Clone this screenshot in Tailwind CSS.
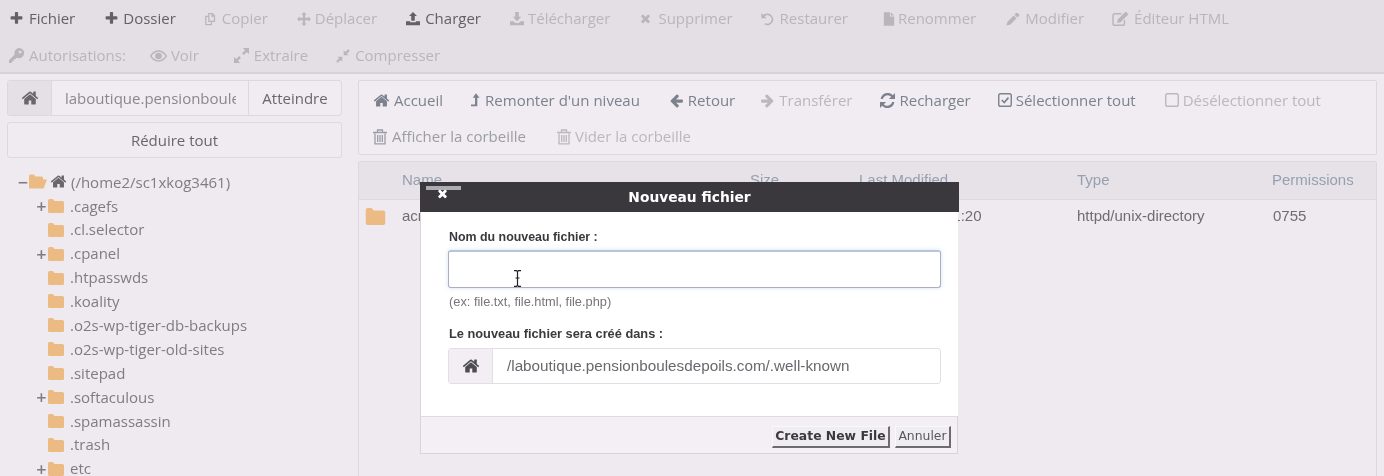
<!DOCTYPE html>
<html><head><meta charset="utf-8"><script src="https://cdn.jsdelivr.net/npm/@tailwindcss/browser@4"></script></head>
<body class="m-0 p-0">
<svg class="hidden" width="0" height="0">
<symbol id="home" viewBox="0 0 1792 1792"><path fill="currentColor" d="M1472 992v480q0 26-19 45t-45 19h-384v-384h-256v384h-384q-26 0-45-19t-19-45v-480q0-1 .5-3t.5-3l575-474 575 474q1 2 1 6zm223-69l-62 74q-8 9-21 11h-3q-13 0-21-7l-692-577-692 577q-12 8-24 7-13-2-21-11l-62-74q-8-10-7-23.500t11-21.500l719-599q32-26 76-26t76 26l244 204v-195q0-14 9-23t23-9h192q14 0 23 9t9 23v408l219 182q10 8 11 21.500t-7 23.500z"/></symbol>
<symbol id="plus" viewBox="0 0 1792 1792"><path fill="currentColor" d="M1600 736v192q0 40-28 68t-68 28h-416v416q0 40-28 68t-68 28h-192q-40 0-68-28t-28-68v-416h-416q-40 0-68-28t-28-68v-192q0-40 28-68t68-28h416v-416q0-40 28-68t68-28h192q40 0 68 28t28 68v416h416q40 0 68 28t28 68z"/></symbol>
<symbol id="times" viewBox="0 0 1792 1792"><path fill="currentColor" d="M1490 1322q0 40-28 68l-136 136q-28 28-68 28t-68-28l-294-294-294 294q-28 28-68 28t-68-28l-136-136q-28-28-28-68t28-68l294-294-294-294q-28-28-28-68t28-68l136-136q28-28 68-28t68 28l294 294 294-294q28-28 68-28t68 28l136 136q28 28 28 68t-28 68l-294 294 294 294q28 28 28 68z"/></symbol>
<symbol id="left" viewBox="0 0 1792 1792"><path fill="currentColor" d="M1664 896v128q0 53-32.500 90.500t-84.500 37.500h-704l293 294q38 36 38 90t-38 90l-75 76q-37 37-90 37-52 0-91-37l-651-652q-37-37-37-90 0-52 37-91l651-650q38-38 91-38 52 0 90 38l75 74q38 38 38 91t-38 91l-293 293h704q52 0 84.500 37.500t32.500 90.500z"/></symbol>
<symbol id="right" viewBox="0 0 1792 1792"><path fill="currentColor" d="M1600 960q0 54-37 91l-651 651q-39 37-91 37-51 0-90-37l-75-75q-38-38-38-91t38-91l293-293h-704q-52 0-84.500-37.500t-32.500-90.500v-128q0-53 32.500-90.500t84.500-37.500h704l-293-294q-38-36-38-90t38-90l75-75q38-38 90-38 53 0 91 38l651 651q37 35 37 90z"/></symbol>
<symbol id="copy" viewBox="0 0 16 16"><path fill="none" stroke="currentColor" stroke-width="1.400" d="M5.500 1.700h4l2.500 2.500v6.600H5.500zM9 1.700v3h3M5.500 5H2v9.300h6.500v-3.500"/></symbol>
<symbol id="move" viewBox="0 0 16 16"><path fill="currentColor" d="M8 0l3 3H9.300v3.700H13V5l3 3-3 3V9.300H9.300V13H11l-3 3-3-3h1.700V9.300H3V11L0 8l3-3v1.700h3.700V3H5z"/></symbol>
<symbol id="upload" viewBox="0 0 16 16"><path fill="currentColor" d="M8 0l4.500 4.700H10V10H6V4.700H3.500zM0 10.500h4.700v1.200h6.600v-1.200H16V15H0z"/></symbol>
<symbol id="download" viewBox="0 0 16 16"><path fill="currentColor" d="M6 0h4v5.500h2.800L8 10.500 3.200 5.500H6zM0 10.500h3.800L6 12.700h4l2.200-2.200H16V15H0z"/></symbol>
<symbol id="undo" viewBox="0 0 16 16"><path fill="none" stroke="currentColor" stroke-width="2" d="M3.500 4.500A5.800 5.800 0 1 1 5 13.500"/><path fill="currentColor" d="M1 1l6 6H1z"/></symbol>
<symbol id="file" viewBox="0 0 14 16"><path fill="currentColor" d="M1 0h7v5h5v11H1zM9 0l4 4H9z"/></symbol>
<symbol id="pencil" viewBox="0 0 16 16"><path fill="currentColor" d="M11.500 1.200a1.500 1.500 0 0 1 2 0l1.300 1.300a1.500 1.500 0 0 1 0 2L13 6.300 9.700 3zM8.800 3.900l3.300 3.300L5 14.300.5 15.500 1.700 11z"/></symbol>
<symbol id="edit" viewBox="0 0 18 16"><path fill="none" stroke="currentColor" stroke-width="1.500" d="M13.200 9.500v3.700a2 2 0 0 1-2 2H3a2 2 0 0 1-2-2V5a2 2 0 0 1 2-2h7"/><path fill="currentColor" d="M14.500.5l3 3L9 12l-3.500.7.600-3.700z"/></symbol>
<symbol id="key" viewBox="0 0 16 16"><path fill="currentColor" fill-rule="evenodd" d="M10.500 0a5.500 5.500 0 1 1-2.200 10.500L6.700 12.100H5v2H3V16H0v-3l6-6A5.500 5.500 0 0 1 10.500 0zm1.300 2.800a1.500 1.500 0 1 0 0 3 1.500 1.500 0 0 0 0-3z"/></symbol>
<symbol id="eye" viewBox="0 0 18 12"><path fill="currentColor" fill-rule="evenodd" d="M9 0c4 0 7.300 2.500 9 6-1.700 3.500-5 6-9 6S1.700 9.500 0 6c1.700-3.500 5-6 9-6zm0 1.500C6 1.500 3.300 3.300 1.700 6 3.300 8.700 6 10.500 9 10.500s5.700-1.800 7.300-4.500C14.700 3.300 12 1.500 9 1.500zM9 2.500a3.500 3.500 0 1 1 0 7 3.500 3.500 0 0 1 0-7z"/></symbol>
<symbol id="expand" viewBox="0 0 16 16"><path fill="currentColor" d="M9.500 0H16v6.500l-2.300-2.300-3.200 3.200-1.900-1.900 3.200-3.200zM6.500 16H0V9.500l2.300 2.300 3.200-3.200 1.900 1.900-3.200 3.200z"/></symbol>
<symbol id="compress" viewBox="0 0 16 16"><path fill="currentColor" d="M8.800 7.200V1.500l1.900 1.900L14 .2l1.800 1.800-3.300 3.300 2 1.900zM7.200 8.800v5.700l-1.900-1.900L2 15.800.2 14l3.300-3.300-2-1.900z"/></symbol>
<symbol id="levelup" viewBox="0 0 10 16"><path fill="currentColor" d="M5.500 0l4 5H7v9.500H0v-2h4.500V5H2z"/></symbol>
<symbol id="refresh" viewBox="0 0 16 16"><path fill="currentColor" d="M13.700 2.300L16 0v6.500H9.500L12 4A5.300 5.300 0 0 0 3 6.500H.7a7.600 7.600 0 0 1 13-4.200zM2.300 13.700L0 16V9.500h6.500L4 12a5.300 5.300 0 0 0 9-2.500h2.300a7.600 7.600 0 0 1-13 4.200z"/></symbol>
<symbol id="check" viewBox="0 0 15 15"><rect x=".8" y=".8" width="13.400" height="13.400" rx="2" fill="none" stroke="currentColor" stroke-width="1.500"/><path fill="none" stroke="currentColor" stroke-width="1.800" d="M4 7.500l2.700 2.700L11.200 5"/></symbol>
<symbol id="square" viewBox="0 0 15 15"><rect x=".8" y=".8" width="13.400" height="13.400" rx="2" fill="none" stroke="currentColor" stroke-width="1.500"/></symbol>
<symbol id="trash" viewBox="0 0 14 16"><path fill="none" stroke="currentColor" stroke-width="1.300" d="M2 4.500v10.300h10V4.500M0 3.500h14M4.500 3.500V1h5v2.500M4.700 6v7M7 6v7M9.300 6v7"/></symbol>
<symbol id="folder" viewBox="0 0 16 14"><path fill="#ecbb84" d="M0 1.500A1.500 1.500 0 0 1 1.500 0h3.300L6.500 2H14.500A1.500 1.500 0 0 1 16 3.500V12.500A1.500 1.500 0 0 1 14.500 14H1.500A1.500 1.500 0 0 1 0 12.500z"/></symbol>
<symbol id="folderopen" viewBox="0 0 18 14"><path fill="#ecbb84" d="M0 1.500A1.500 1.500 0 0 1 1.500 0h3.300L6.500 2h6A1.500 1.500 0 0 1 14 3.500V5h4l-3.500 9H0z"/></symbol>
</svg>

<div class="relative h-[476px] w-[1384px] overflow-hidden bg-[#eeeaf0] font-['Open_Sans',sans-serif] text-[15px] text-[#8a878d] blur-[0.35px]">
  <!-- top toolbar -->
  <div class="h-[74px] border-b-2 border-[#d6d2d9] bg-[#e3dfe5] pl-[9px] text-[#b8b5bb]">
    <div class="flex h-[37px] items-center gap-[29px]">
      <span class="flex items-center gap-[5px] text-[#636066]"><svg class="h-[15px] w-[15px]"><use href="#plus"/></svg>Fichier</span>
      <span class="flex items-center gap-[4px] text-[#636066]"><svg class="h-[15px] w-[15px]"><use href="#plus"/></svg>Dossier</span>
      <span class="-ml-[1px] flex items-center gap-[4px]"><svg class="h-[14px] w-[14px]"><use href="#copy"/></svg>Copier</span>
      <span class="flex items-center gap-[4px]"><svg class="h-[14px] w-[14px]"><use href="#move"/></svg>Déplacer</span>
      <span class="flex items-center gap-[5px] text-[#636066]"><svg class="h-[14px] w-[14px]"><use href="#upload"/></svg>Charger</span>
      <span class="flex items-center gap-[4px]"><svg class="h-[14px] w-[14px]"><use href="#download"/></svg>Télécharger</span>
      <span class="flex items-center gap-[6px]"><svg class="h-[13px] w-[13px]"><use href="#times"/></svg>Supprimer</span>
      <span class="-ml-[2px] flex items-center gap-[5px]"><svg class="h-[14px] w-[15px]"><use href="#undo"/></svg>Restaurer</span>
      <span class="ml-[6px] flex items-center gap-[3px]"><svg class="h-[14px] w-[12px]"><use href="#file"/></svg>Renommer</span>
      <span class="ml-[1px] flex items-center gap-[5px]"><svg class="h-[14px] w-[14px]"><use href="#pencil"/></svg>Modifier</span>
      <span class="-ml-[1px] flex items-center gap-[5px]"><svg class="h-[15px] w-[17px]"><use href="#edit"/></svg>Éditeur HTML</span>
    </div>
    <div class="flex h-[37px] items-center gap-[24px]">
      <span class="flex items-center gap-[5px]"><svg class="h-[15px] w-[15px]"><use href="#key"/></svg>Autorisations:</span>
      <span class="flex items-center gap-[4px]"><svg class="h-[12px] w-[17px]"><use href="#eye"/></svg>Voir</span>
      <span class="ml-[11px] flex items-center gap-[5px]"><svg class="h-[15px] w-[15px]"><use href="#expand"/></svg>Extraire</span>
      <span class="ml-[4px] flex items-center gap-[5px]"><svg class="h-[14px] w-[14px]"><use href="#compress"/></svg>Compresser</span>
    </div>
  </div>

  <div class="flex pl-[7px] pr-[7px] pt-[6px]">
    <!-- left -->
    <div class="w-[335px] shrink-0 text-[#77747a]">
      <div class="flex h-[36px] rounded-[3px] border border-[#dcd8df] bg-[#f0ecf2]">
        <div class="flex w-[44px] items-center justify-center border-r border-[#dcd8df] bg-[#e4e0e6]"><svg class="h-[18px] w-[18px] text-[#69666c]"><use href="#home"/></svg></div>
        <div class="w-[196px] pl-[13px] pr-[12px] leading-[34px] text-[#8a878d]"><div class="overflow-hidden whitespace-nowrap">laboutique.pensionboulesdepoils.com</div></div>
        <div class="flex-1 border-l border-[#dcd8df] text-center leading-[34px] text-[#69666c]">Atteindre</div>
      </div>
      <div class="mt-[6px] h-[36px] rounded-[3px] border border-[#dcd8df] bg-[#efebf1] text-center leading-[34px] text-[#69666c]">Réduire tout</div>
      <div class="mt-[12px] text-[#7f7c82]">
        <div class="flex h-[23.900px] items-center pl-[10px]"><span class="w-[12px] text-center text-[18px] font-semibold leading-none">−</span><svg class="h-[15px] w-[18px]"><use href="#folderopen"/></svg><svg class="ml-[3px] h-[17px] w-[17px] text-[#69666c]"><use href="#home"/></svg><span class="ml-[4px]">(/home2/sc1xkog3461)</span></div>
        <div class="flex h-[23.900px] items-center pl-[28px]"><span class="w-[13px] text-center text-[18px] font-semibold leading-none">+</span><svg class="h-[14px] w-[16px]"><use href="#folder"/></svg><span class="ml-[6px]">.cagefs</span></div>
        <div class="flex h-[23.900px] items-center pl-[41px]"><svg class="h-[14px] w-[16px]"><use href="#folder"/></svg><span class="ml-[6px]">.cl.selector</span></div>
        <div class="flex h-[23.900px] items-center pl-[28px]"><span class="w-[13px] text-center text-[18px] font-semibold leading-none">+</span><svg class="h-[14px] w-[16px]"><use href="#folder"/></svg><span class="ml-[6px]">.cpanel</span></div>
        <div class="flex h-[23.900px] items-center pl-[41px]"><svg class="h-[14px] w-[16px]"><use href="#folder"/></svg><span class="ml-[6px]">.htpasswds</span></div>
        <div class="flex h-[23.900px] items-center pl-[41px]"><svg class="h-[14px] w-[16px]"><use href="#folder"/></svg><span class="ml-[6px]">.koality</span></div>
        <div class="flex h-[23.900px] items-center pl-[41px]"><svg class="h-[14px] w-[16px]"><use href="#folder"/></svg><span class="ml-[6px]">.o2s-wp-tiger-db-backups</span></div>
        <div class="flex h-[23.900px] items-center pl-[41px]"><svg class="h-[14px] w-[16px]"><use href="#folder"/></svg><span class="ml-[6px]">.o2s-wp-tiger-old-sites</span></div>
        <div class="flex h-[23.900px] items-center pl-[41px]"><svg class="h-[14px] w-[16px]"><use href="#folder"/></svg><span class="ml-[6px]">.sitepad</span></div>
        <div class="flex h-[23.900px] items-center pl-[28px]"><span class="w-[13px] text-center text-[18px] font-semibold leading-none">+</span><svg class="h-[14px] w-[16px]"><use href="#folder"/></svg><span class="ml-[6px]">.softaculous</span></div>
        <div class="flex h-[23.900px] items-center pl-[41px]"><svg class="h-[14px] w-[16px]"><use href="#folder"/></svg><span class="ml-[6px]">.spamassassin</span></div>
        <div class="flex h-[23.900px] items-center pl-[41px]"><svg class="h-[14px] w-[16px]"><use href="#folder"/></svg><span class="ml-[6px]">.trash</span></div>
        <div class="flex h-[23.900px] items-center pl-[28px]"><span class="w-[13px] text-center text-[18px] font-semibold leading-none">+</span><svg class="h-[14px] w-[16px]"><use href="#folder"/></svg><span class="ml-[6px]">etc</span></div>
      </div>
    </div>

    <!-- right -->
    <div class="ml-[16px] flex-1">
      <div class="h-[75px] rounded-[2px] border border-[#dcd8df] bg-[#f0ecf2] pl-[14px] text-[#bab7bd]">
        <div class="flex h-[38px] items-center gap-[28px]">
          <span class="flex items-center gap-[4px] text-[#7c828d]"><svg class="h-[17px] w-[17px]"><use href="#home"/></svg>Accueil</span>
          <span class="flex items-center gap-[5px] text-[#7c828d]"><svg class="h-[15px] w-[9px]"><use href="#levelup"/></svg>Remonter d'un niveau</span>
          <span class="ml-[1px] flex items-center gap-[4px] text-[#7c828d]"><svg class="h-[15px] w-[15px]"><use href="#left"/></svg>Retour</span>
          <span class="-ml-[3px] flex items-center gap-[4px]"><svg class="h-[15px] w-[15px]"><use href="#right"/></svg>Transférer</span>
          <span class="flex items-center gap-[4px] text-[#7c828d]"><svg class="h-[15px] w-[15px]"><use href="#refresh"/></svg>Recharger</span>
          <span class="-ml-[1px] flex items-center gap-[4px] text-[#7c828d]"><svg class="h-[14px] w-[14px]"><use href="#check"/></svg>Sélectionner tout</span>
          <span class="ml-[1px] flex items-center gap-[4px]"><svg class="h-[14px] w-[14px]"><use href="#square"/></svg>Désélectionner tout</span>
        </div>
        <div class="flex h-[35px] items-center gap-[30px]">
          <span class="flex items-center gap-[5px] text-[#9a9da5]"><svg class="h-[16px] w-[14px]"><use href="#trash"/></svg>Afficher la corbeille</span>
          <span class="ml-[1px] flex items-center gap-[4px]"><svg class="h-[16px] w-[14px]"><use href="#trash"/></svg>Vider la corbeille</span>
        </div>
      </div>
      <div class="mt-[6px] h-[330px] rounded-t-[2px] border border-[#dcd8df] font-['Liberation_Sans',sans-serif] text-[15px]">
        <div class="relative h-[38px] border-b border-[#dcd8df] bg-[#e6e2e8] leading-[36px] text-[#96a0b0]">
          <span class="absolute left-[43px]">Name</span><span class="absolute left-[391px]">Size</span><span class="absolute left-[500px]">Last Modified</span><span class="absolute left-[718px]">Type</span><span class="absolute left-[913px]">Permissions</span>
        </div>
        <div class="relative h-[34px] leading-[32px] text-[#6f6c73]">
          <svg class="absolute left-[5px] top-[8px] h-[17px] w-[23px]"><use href="#folder"/></svg>
          <span class="absolute left-[43px]">acme-challenge</span><span class="absolute left-[491px] whitespace-nowrap">Jun 12, 2023, 11:20</span><span class="absolute left-[718px]">httpd/unix-directory</span><span class="absolute left-[914px]">0755</span>
        </div>
      </div>
    </div>
  </div>

  <!-- modal -->
  <div class="absolute left-[420px] top-[182px] w-[539px] font-['Liberation_Sans',sans-serif]">
    <div class="relative h-[30px] bg-[#3a383c] text-center font-['DejaVu_Sans',sans-serif] text-[13.800px] font-bold leading-[31px] text-white">Nouveau fichier
      <div class="absolute left-[6px] top-[4px] h-[4px] w-[35px] bg-[#aeacb2]"></div>
      <svg class="absolute left-[16px] top-[5px] h-[13px] w-[13px] text-white"><use href="#times"/></svg>
    </div>
    <div class="mr-px h-[204px] border-l border-[#d8d4db] bg-white pl-[27px] pt-[17px]">
      <div class="ml-px text-[12.400px] font-bold leading-[16px] text-[#3b393d]">Nom du nouveau fichier :</div>
      <div class="relative mt-[5px] h-[38px] w-[493px] rounded-[3px] border border-[#a9afc0] border-t-2 border-t-[#b9c3d9] bg-white shadow-[0_0_4px_rgba(130,160,210,0.35)]">
        <svg class="absolute left-[64px] top-[18px] h-[17px] w-[9px]" viewBox="0 0 9 17"><path fill="none" stroke="#222" stroke-width="1.200" d="M1 .7h2.500L4.500 1.700 5.500.7H8M4.500 1.700v13.600M1 16.300h2.500l1-1 1 1H8M2.500 8h4"/></svg>
      </div>
      <div class="ml-px mt-[6px] text-[12.800px] leading-[15px] text-[#77747a]">(ex: file.txt, file.html, file.php)</div>
      <div class="ml-px mt-[17px] text-[12.800px] font-bold leading-[16px] text-[#3b393d]">Le nouveau fichier sera créé dans :</div>
      <div class="mt-[6px] flex h-[36px] w-[493px] rounded-[3px] border border-[#e2dee5]">
        <div class="flex w-[44px] items-center justify-center border-r border-[#e2dee5] bg-[#f2eef4]"><svg class="h-[18px] w-[18px] text-[#4e4c50]"><use href="#home"/></svg></div>
        <div class="pl-[14px] text-[15.250px] leading-[34px] text-[#6a676d]">/laboutique.pensionboulesdepoils.com/.well-known</div>
      </div>
    </div>
    <div class="mr-px flex h-[38px] items-center justify-end gap-[5px] border-x border-y border-[#d8d4db] border-t-[#dedae1] bg-[#f3eff5] pr-[6px] pt-[3px] font-['DejaVu_Sans',sans-serif] text-[12.400px]">
      <span class="flex h-[22px] w-[118px] items-center justify-center border border-r-2 border-b-2 border-[#f8f8f8] border-r-[#6d6b70] border-b-[#6d6b70] bg-[#f0edf2] font-bold text-[#3b393d]">Create New File</span>
      <span class="flex h-[22px] w-[56px] items-center justify-center border border-r-2 border-b-2 border-[#f8f8f8] border-r-[#6d6b70] border-b-[#6d6b70] bg-[#f0edf2] text-[#59565c]">Annuler</span>
    </div>
  </div>
</div>
</body></html>
